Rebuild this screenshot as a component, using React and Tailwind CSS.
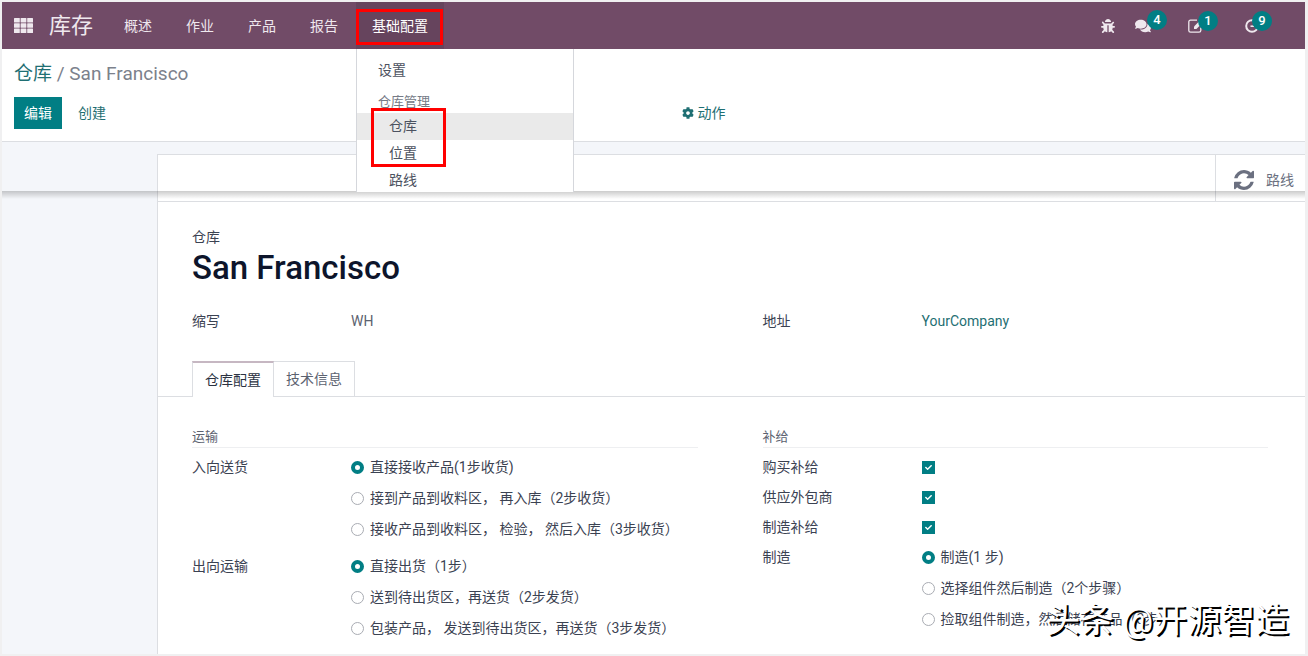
import { FaBug, FaComments, FaCog, FaCheck } from "react-icons/fa";

const NAV_ITEMS = ["概述", "作业", "产品", "报告"];

const RECEPTION_STEPS = [
  "直接接收产品(1步收货)",
  "接到产品到收料区， 再入库（2步收货）",
  "接收产品到收料区， 检验， 然后入库（3步收货）",
];

const DELIVERY_STEPS = [
  "直接出货（1步）",
  "送到待出货区，再送货（2步发货）",
  "包装产品， 发送到待出货区，再送货（3步发货）",
];

const MANUFACTURE_STEPS = [
  "制造(1 步)",
  "选择组件然后制造（2个步骤）",
  "捡取组件制造，然后储存产品（3步）",
];

const AppsIcon = () => (
  <svg viewBox="0 0 19 15" className="w-[19px] h-[15px]" fill="currentColor" aria-hidden="true">
    {[0, 5.3, 10.6].map((y) =>
      [0, 6.6, 13.2].map((x) => <rect key={`${x}-${y}`} x={x} y={y} width="5.8" height="4.4" rx="0.5" />)
    )}
  </svg>
);

const RefreshIcon = () => (
  <svg viewBox="0 0 1536 1536" className="size-5" fill="currentColor" aria-hidden="true">
    <path d="M1511 928q0 5-1 7-64 268-268 434.5t-478 166.5q-146 0-282.500-55t-243.500-157l-129 129q-19 19-45 19t-45-19-19-45v-448q0-26 19-45t45-19h448q26 0 45 19t19 45-19 45l-137 137q71 66 161 102t187 36q134 0 250-65t186-179q11-17 53-117 8-23 30-23h192q13 0 22.500 9.500t9.500 22.500zm25-800v448q0 26-19 45t-45 19h-448q-26 0-45-19t-19-45 19-45l138-138q-148-137-349-137-134 0-250 65t-186 179q-11 17-53 117-8 23-30 23h-199q-13 0-22.500-9.500t-9.500-22.500v-7q65-268 270-434.500t480-166.500q146 0 284 55.500t245 156.500l130-129q19-19 45-19t45 19 19 45z" />
  </svg>
);

const NoteIcon = () => (
  <svg viewBox="0 0 14 14" className="size-3.5" fill="none" stroke="currentColor" strokeWidth="1.3" aria-hidden="true">
    <path d="M9 1.200H2.600Q0.800 1.200 0.800 3v8.400q0 1.800 1.800 1.800h8.400q1.800 0 1.800-1.800V8.500" />
    <path d="M6 10V7.600L11 2.600l2.400 2.400-5 5z" fill="currentColor" stroke="none" />
  </svg>
);

const ActivityIcon = () => (
  <svg viewBox="0 0 14 14" className="size-3.5" fill="none" stroke="currentColor" strokeWidth="2" aria-hidden="true">
    <circle cx="7" cy="7" r="5.800" />
    <path d="M5.500 7.200H9" strokeWidth="1.600" />
  </svg>
);

const SystrayButton = ({ label, count, className, badgeClass, children }) => (
  <button type="button" aria-label={label} className={`relative flex items-center ${className}`}>
    {children}
    {count && (
      <span className={`absolute -top-2 h-5 min-w-5 rounded-full bg-[#017e84] text-[13px] leading-5 font-medium text-center text-white ${badgeClass}`}>
        {count}
      </span>
    )}
  </button>
);

const ConfigMenu = () => (
  <div className="absolute left-0 top-full z-20 w-[218px] h-[143px] overflow-hidden bg-white border-x border-[#d5d7dc] text-[#4c5260]">
    <a href="#settings" className="block pl-[21px] pt-[7px] leading-7">设置</a>
    <div className="pl-[21px] pt-[7px] text-[13px] leading-[22px] text-[#767b87]">仓库管理</div>
    <a href="#warehouses" className="block pl-8 leading-[27px] bg-[#eaeaea]">仓库</a>
    <a href="#locations" className="block pl-8 leading-[27px]">位置</a>
    <a href="#routes" className="block pl-8 leading-[27px]">路线</a>
    <div className="absolute left-[14px] top-[59px] w-[75px] h-[59px] border-[3px] border-[#f00]" />
  </div>
);

const Navbar = () => (
  <header className="flex h-[47px] items-center bg-[#714b67] pl-3 pr-10 text-[#efe8ee]">
    <button type="button" aria-label="应用" className="flex">
      <AppsIcon />
    </button>
    <a href="#inventory" className="ml-4 w-11 text-[22px] leading-8 whitespace-nowrap">库存</a>
    <nav className="ml-[15px] flex h-full gap-0.5">
      {NAV_ITEMS.map((item) => (
        <a key={item} href={`#${item}`} className="flex items-center px-4">{item}</a>
      ))}
      <div className="relative">
        <button type="button" className="h-full bg-[#66445d] px-4 text-white">基础配置</button>
        <div className="absolute left-0 top-[7px] h-9 w-[87px] border-[3px] border-[#f00]" />
        <ConfigMenu />
      </div>
    </nav>
    <div className="ml-auto flex items-center">
      <SystrayButton label="调试" className="mr-5">
        <FaBug className="size-3.5" />
      </SystrayButton>
      <SystrayButton label="消息" count={4} className="mr-[37px]" badgeClass="left-3">
        <FaComments className="size-4" />
      </SystrayButton>
      <SystrayButton label="便签" count={1} className="mr-[43px]" badgeClass="left-2.5">
        <NoteIcon />
      </SystrayButton>
      <SystrayButton label="活动" count={9} className="mr-1.5" badgeClass="left-[7px]">
        <ActivityIcon />
      </SystrayButton>
    </div>
  </header>
);

const ControlPanel = () => (
  <div className="border-b border-[#dcdee2] bg-white px-3 pt-[11px] pb-3">
    <div className="text-[19px] leading-7 text-[#7c818c]">
      <a href="#warehouses" className="text-[#1f6f73]">仓库</a> / San Francisco
    </div>
    <div className="mt-[9px] grid grid-cols-2 items-center">
      <div className="flex">
        <button type="button" className="h-8 bg-[#017e84] px-2.5 text-white">编辑</button>
        <button type="button" className="h-8 px-4 text-[#1f6f73]">创建</button>
      </div>
      <button type="button" className="flex items-center gap-1 pl-7 text-[#1f6f73]">
        <FaCog className="size-3" />
        动作
      </button>
    </div>
  </div>
);

const Field = ({ label, children }) => (
  <div className="flex">
    <div className="w-[159px] shrink-0">{label}</div>
    <div>{children}</div>
  </div>
);

const RadioGroup = ({ name, label, options }) => (
  <div role="radiogroup" aria-label={label} className="flex">
    <div className="w-[159px] shrink-0">{label}</div>
    <div className="flex flex-col gap-[11px]">
      {options.map((option, i) => (
        <label key={option} className="flex items-center gap-1.5 whitespace-nowrap">
          <input
            type="radio"
            name={name}
            defaultChecked={i === 0}
            className="size-[13px] appearance-none rounded-full border border-[#a9acb3] bg-white checked:border-4 checked:border-[#017e84]"
          />
          {option}
        </label>
      ))}
    </div>
  </div>
);

const CheckField = ({ id, label }) => (
  <div className="flex">
    <label htmlFor={id} className="w-[159px] shrink-0">{label}</label>
    <span className="relative flex items-center">
      <input id={id} type="checkbox" defaultChecked className="size-[13px] appearance-none bg-[#017e84]" />
      <FaCheck className="pointer-events-none absolute left-[3px] size-[7px] text-white" />
    </span>
  </div>
);

const GroupTitle = ({ children }) => (
  <h2 className="border-b border-[#eeeff1] text-[13px] leading-5 text-[#5c6270]">{children}</h2>
);

const Sheet = () => (
  <main className="ml-[155px] border-l border-t border-[#dcdee2] bg-white">
    <div className="flex h-[47px] justify-end border-b border-[#dcdee2]">
      <button type="button" className="flex items-center gap-3 border-l border-[#dcdee2] pl-[18px] pr-[11px] pt-1 text-[#6b7080]">
        <RefreshIcon />
        路线
      </button>
    </div>

    <div className="pl-[34px] pr-[37px] pt-[25px]">
      <div className="leading-5">仓库</div>
      <h1 className="text-[33px] leading-[42px] font-medium text-[#0d152b]">San Francisco</h1>
      <div className="mt-[22px] grid grid-cols-2 gap-x-[65px] leading-5">
        <Field label="缩写">
          <span className="text-[#5c6270]">WH</span>
        </Field>
        <Field label="地址">
          <a href="#company" className="text-[#1f6f73]">YourCompany</a>
        </Field>
      </div>
    </div>

    <div role="tablist" className="mt-[30px] flex border-b border-[#dcdee2] pl-[34px]">
      <button type="button" role="tab" aria-selected="true" className="-mb-px h-9 border-x border-t-2 border-[#dcdee2] border-t-[#c6b7c2] bg-white px-3 text-[#2b3242]">
        仓库配置
      </button>
      <button type="button" role="tab" aria-selected="false" className="h-[35px] border-r border-t border-[#dcdee2] px-3 text-[#5c6270]">
        技术信息
      </button>
    </div>

    <div className="grid grid-cols-2 gap-x-[65px] pl-[34px] pr-[37px] pt-[30px] pb-4 leading-5">
      <section>
        <GroupTitle>运输</GroupTitle>
        <div className="mt-[9px] flex flex-col gap-[17px]">
          <RadioGroup name="reception" label="入向送货" options={RECEPTION_STEPS} />
          <RadioGroup name="delivery" label="出向运输" options={DELIVERY_STEPS} />
        </div>
      </section>
      <section>
        <GroupTitle>补给</GroupTitle>
        <div className="mt-[9px] flex flex-col gap-2.5">
          <CheckField id="buy" label="购买补给" />
          <CheckField id="subcontract" label="供应外包商" />
          <CheckField id="produce" label="制造补给" />
          <RadioGroup name="manufacture" label="制造" options={MANUFACTURE_STEPS} />
        </div>
      </section>
    </div>
  </main>
);

const App = () => {
  return (
    <div className="relative min-h-screen border-2 border-r-[3px] border-[#f0f0f1] bg-[#f4f6fa] font-['Roboto','Noto_Sans_CJK_SC',sans-serif] text-sm text-[#3b4252]">
      <Navbar />
      <ControlPanel />
      <div className="relative pt-3">
        <div className="pointer-events-none absolute inset-x-0 top-[49px] h-2 bg-linear-to-b from-black/20 to-transparent" />
        <Sheet />
      </div>
      <div
        lang="zh-CN"
        className="absolute bottom-2.5 right-4 text-[34px] leading-12 whitespace-nowrap text-white [text-shadow:2px_2px_0_#000]"
      >
        头条 @开源智造
      </div>
    </div>
  );
};

export default App;
